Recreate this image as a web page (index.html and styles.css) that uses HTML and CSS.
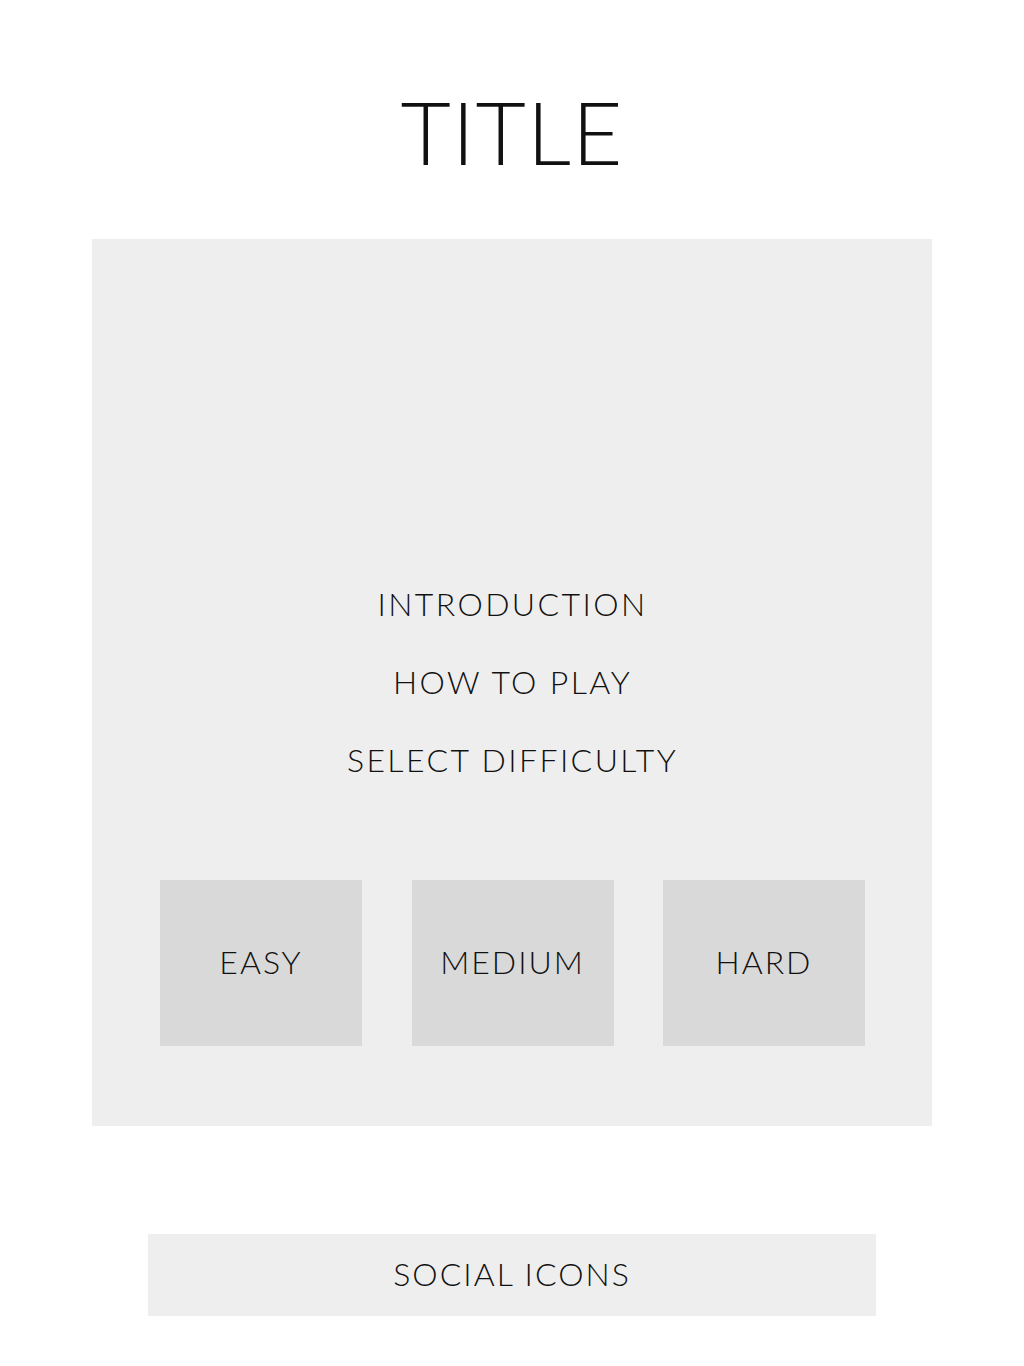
FILE: index.html
```html
<!DOCTYPE html>
<html lang="en">
<head>
    <meta charset="UTF-8">
    <meta name="viewport" content="width=device-width, initial-scale=1.0">
    <title>Title</title>
    <link rel="stylesheet" href="styles.css">
</head>
<body>

    <!-- Header -->
    <h1 class="title">Title</h1>

    <!-- Main panel -->
    <main class="panel">
        <nav class="menu">
            <a href="#">Introduction</a>
            <a href="#">How to play</a>
            <a href="#">Select Difficulty</a>
        </nav>

        <div class="levels">
            <button class="level">Easy</button>
            <button class="level">Medium</button>
            <button class="level">Hard</button>
        </div>
    </main>

    <!-- Footer -->
    <footer class="social">Social icons</footer>

</body>
</html>
```

FILE: styles.css
```css
body {
    font-family: Lato, "Open Sans", sans-serif;
    font-weight: 300;
    margin: 0;
    padding: 0;
    background-color: #fff;
    color: #111;
}

.title {
    margin: 0;
    padding-top: 80px;
    height: 105px;
    text-align: center;
    font-size: 87px;
    font-weight: 300;
    line-height: 1.2;
    letter-spacing: 1px;
    text-transform: uppercase;
}

.panel {
    width: 840px;
    height: 887px;
    box-sizing: border-box;
    margin: 54px auto 0;
    padding: 326px 67px 80px 68px;
    background-color: #eeeeee;
    display: flex;
    flex-direction: column;
}

.menu {
    display: flex;
    flex-direction: column;
    align-items: center;
}

.menu a {
    text-decoration: none;
    color: #111;
    font-size: 32px;
    line-height: 78px;
    letter-spacing: 2.4px;
    text-transform: uppercase;
}

.levels {
    margin-top: 81px;
    display: flex;
    justify-content: space-between;
}

.level {
    width: 202px;
    height: 166px;
    padding: 0 0 4px;
    border: none;
    background-color: #d9d9d9;
    font-family: inherit;
    font-weight: 300;
    font-size: 32px;
    letter-spacing: 2px;
    color: #111;
    text-transform: uppercase;
    cursor: pointer;
}

.social {
    width: 728px;
    height: 82px;
    box-sizing: border-box;
    padding-bottom: 3px;
    margin: 108px auto 0;
    background-color: #eeeeee;
    display: flex;
    justify-content: center;
    align-items: center;
    font-size: 32px;
    letter-spacing: 2px;
    text-transform: uppercase;
}
```
